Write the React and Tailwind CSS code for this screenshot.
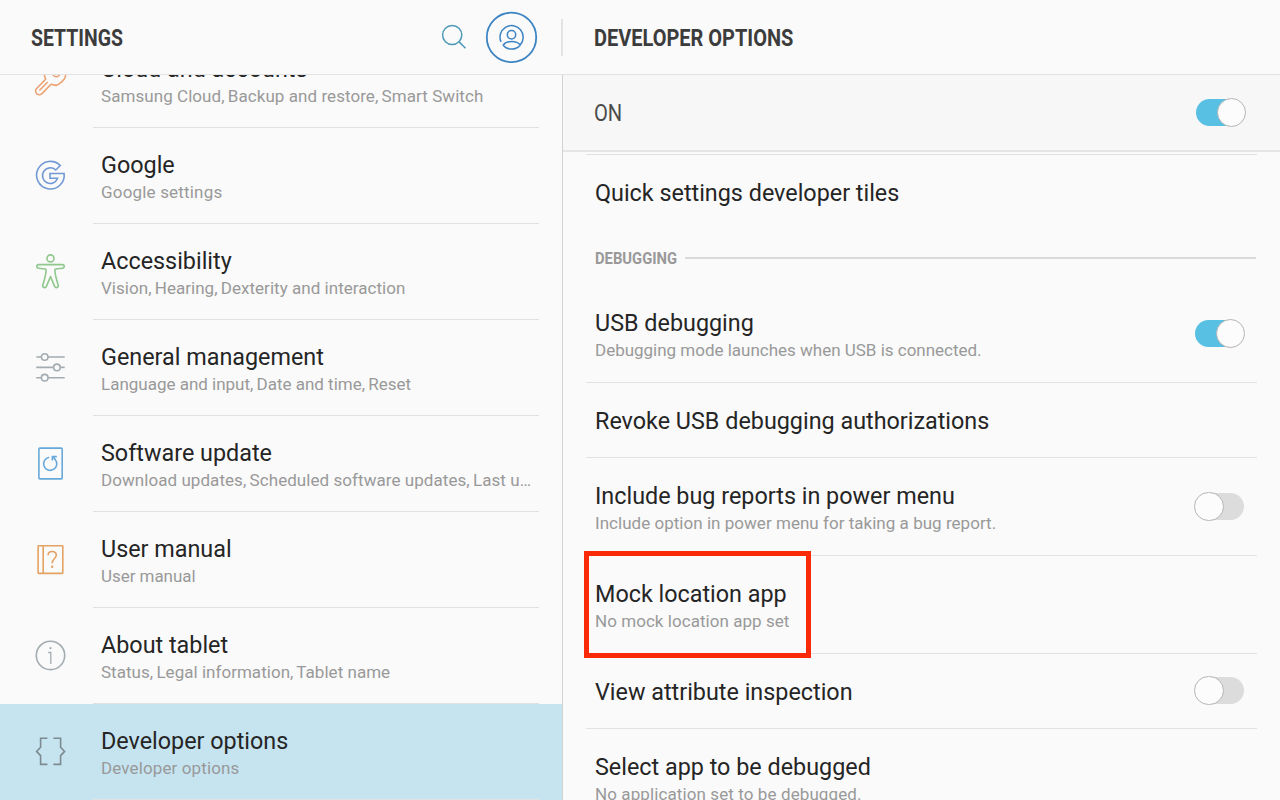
import React from "react";

function Icon({ color, children }) {
  return (
    <svg className={`h-9 w-9 ${color}`} viewBox="0 0 36 36" fill="none" stroke="currentColor" strokeWidth="1.6" strokeLinejoin="round">
      {children}
    </svg>
  );
}

const KeyIcon = () => (
  <Icon color="text-[#eda273]">
    <path d="M12.3 13C11.6 6 17 1.5 23 1.7C30 2 35 8 33.2 15.2C32 18.5 27.5 22.5 24 23.4L19 22.2L10 31.6C8 33.4 4.9 33 4 30.8C3.5 29.3 3.5 27.8 4.4 26.8L13.6 17.2Z" />
    <path d="M7.4 28.5L15.7 20" />
    <circle cx="24.3" cy="11.4" r="3.4" />
  </Icon>
);

const GoogleIcon = () => (
  <Icon color="text-[#7299d3]">
    <path d="M28.3 7.6A13.8 13.8 0 1 0 32.1 15.5H18V20.3H25.6A7.8 7.8 0 1 1 23.7 12Z" strokeLinejoin="miter" />
  </Icon>
);

const AccessibilityIcon = () => (
  <Icon color="text-[#8fc78c]">
    <circle cx="18.5" cy="4.4" r="3.5" />
    <path d="M6.6 10.6H30.4A1.8 1.8 0 0 1 30.4 14.2L23.6 15C23 15 22.9 15.5 22.9 16.2C23 21.5 25 26.5 26.2 31.2C26.8 33.6 23.6 34.5 22.6 32.4L18.5 22.6L14.4 32.4C13.4 34.5 10.2 33.6 10.8 31.2C12 26.5 14 21.5 14.1 16.2C14.1 15.5 14 15 13.4 15L6.6 14.2A1.8 1.8 0 0 1 6.6 10.6Z" />
  </Icon>
);

const SlidersIcon = () => (
  <Icon color="text-[#a3acb1]">
    <path d="M4.3 7H9.4M16 7H32.7M4.3 17.4H21.6M28.2 17.4H32.7M4.3 27.7H9.4M16 27.7H32.7" />
    <circle cx="12.7" cy="7" r="3.3" />
    <circle cx="24.9" cy="17.4" r="3.3" />
    <circle cx="12.7" cy="27.7" r="3.3" />
  </Icon>
);

const UpdateIcon = () => (
  <Icon color="text-[#67a9da]">
    <rect x="6.9" y="2.1" width="23.3" height="30.8" rx="1" />
    <path d="M17.2 11.2A6.6 6.6 0 1 0 23.2 13.4L20.6 10.8" />
    <path d="M20.4 14.6V10.6H24.8" strokeLinejoin="miter" />
  </Icon>
);

const ManualIcon = () => (
  <Icon color="text-[#e4a262]">
    <rect x="6.1" y="3.8" width="24.7" height="27.6" rx=".6" />
    <path d="M11.2 3.6V31.6" />
    <path d="M16.1 13.2C16.1 10.9 17.8 9.5 20.2 9.5C22.6 9.5 24.3 11 24.3 13.2C24.3 16.3 20.2 16.8 20.2 21.2" />
    <circle cx="20.2" cy="24.7" r="1.2" fill="currentColor" stroke="none" />
  </Icon>
);

const InfoIcon = () => (
  <Icon color="text-[#a3acb1]">
    <circle cx="18.5" cy="17.4" r="14.2" />
    <path d="M16.2 14.5H18.8V26" strokeWidth="1.3" strokeLinejoin="miter" />
    <circle cx="18.4" cy="10.2" r="1.1" fill="currentColor" stroke="none" />
  </Icon>
);

const BracesIcon = () => (
  <Icon color="text-[#7d8a8f]">
    <path d="M15.4 4.3H8.6V13.2L4.6 17.4L8.6 21.6V30.4H15.4M21.4 4.3H28.6V13.2L32.6 17.4L28.6 21.6V30.4H21.4" strokeLinejoin="miter" />
  </Icon>
);

const categories = [
  { title: "Cloud and accounts", detail: "Samsung Cloud, Backup and restore, Smart Switch", Glyph: KeyIcon, tracking: "tracking-[0.06px]" },
  { title: "Google", detail: "Google settings", Glyph: GoogleIcon, tracking: "tracking-[0.18px]" },
  { title: "Accessibility", detail: "Vision, Hearing, Dexterity and interaction", Glyph: AccessibilityIcon },
  { title: "General management", detail: "Language and input, Date and time, Reset", Glyph: SlidersIcon, tracking: "tracking-[-0.01px]" },
  { title: "Software update", detail: "Download updates, Scheduled software updates, Last u…", Glyph: UpdateIcon, tracking: "tracking-[0.06px]" },
  { title: "User manual", detail: "User manual", Glyph: ManualIcon, tracking: "tracking-[-0.05px]" },
  { title: "About tablet", detail: "Status, Legal information, Tablet name", Glyph: InfoIcon },
  { title: "Developer options", detail: "Developer options", Glyph: BracesIcon, selected: true, tracking: "tracking-[0.12px]" },
];

// Commas are set slightly tight against the following space.
function Detail({ text }) {
  return text.split(/(,)/).map((part, i) =>
    part === "," ? (
      <span key={i} className="tracking-[-1px]">,</span>
    ) : (
      part
    )
  );
}

function Label({ title, detail, tracking = "tracking-[0.03px]" }) {
  return (
    <div className="whitespace-nowrap">
      <div className="h-8 w-max origin-left scale-x-[0.973] text-[24px] leading-8 text-[#252525]">{title}</div>
      {detail && (
        <div className={`mt-px h-5 text-[17px] leading-5 text-[#999999] ${tracking}`}>
          <Detail text={detail} />
        </div>
      )}
    </div>
  );
}

function Category({ title, detail, Glyph, selected, tracking }) {
  return (
    <li className={`flex h-24 shrink-0 ${selected ? "bg-[#c5e4f0]" : ""}`}>
      <div className="w-[93px] shrink-0 pt-[30px] pl-8">
        <Glyph />
      </div>
      <div className="w-[446px] border-b border-[#e2e2e2] pt-[21px] pl-2">
        <Label title={title} detail={detail} tracking={tracking} />
      </div>
    </li>
  );
}

function Toggle({ on }) {
  return (
    <div className={`flex h-[27px] w-[49px] shrink-0 items-center rounded-full ${on ? "justify-end bg-[#58c0e3]" : "justify-start bg-[#dcdcdc]"}`}>
      <div className={`h-[29px] w-[29.5px] shrink-0 rounded-full border border-[#b4b4b4] bg-[#fcfcfc] ${on ? "-mr-px" : "-ml-px"}`} />
    </div>
  );
}

function Option({ title, detail, toggle, highlighted, tracking }) {
  return (
    <div className={`relative ml-[23px] flex w-[671px] shrink-0 justify-between border-b border-[#e2e2e2] pl-[9px] ${detail ? "h-[98px]" : "h-[75px]"}`}>
      <div className="pt-[22px]">
        <Label title={title} detail={detail} tracking={tracking} />
      </div>
      {toggle && (
        <div className={`flex items-center pr-[13px] ${detail ? "" : "pb-px"}`}>
          <Toggle on={toggle === "on"} />
        </div>
      )}
      {highlighted && <div className="absolute -top-[5px] -left-[2px] h-[107px] w-[227px] border-[5px] border-[#fa2a08]" />}
    </div>
  );
}

function Header() {
  return (
    <header className="flex h-[75px] shrink-0 items-center border-b border-[#e3e3e3] text-[24px] font-bold text-[#3c3c3c]">
      <div className="w-[410px] pt-[2px] pl-[31px]">
        <h1 className="w-max origin-left scale-x-[0.81] whitespace-nowrap">SETTINGS</h1>
      </div>
      <svg className="ml-[28px] h-[74px] w-[106px]" viewBox="438 0 106 74" fill="none" strokeWidth="1.5">
        <g stroke="#4d9ab7">
          <circle cx="452.2" cy="35" r="9.6" />
          <path d="M458.9 41.6L465.5 48.3" />
        </g>
        <g stroke="#3d84c3">
          <circle cx="511.5" cy="37.4" r="24.7" strokeWidth="1.8" />
          <path d="M501 41.9A11.6 11.6 0 1 1 520.2 45" />
          <circle cx="511.5" cy="34.7" r="4.2" />
          <path d="M503.2 45.1C505 42.5 508 41.5 511.6 41.5C515.5 41.5 518.5 42.6 520.2 45C518 48 515 49.1 511.6 49.1C508 49.1 505 47.6 503.2 45.1Z" />
        </g>
      </svg>
      <div className="ml-[17px] h-[37px] w-[2px] bg-[#e3e3e3]" />
      <div className="pt-[2px] pl-[31px]">
        <h2 className="w-max origin-left scale-x-[0.832] whitespace-nowrap">DEVELOPER OPTIONS</h2>
      </div>
    </header>
  );
}

export default function App() {
  return (
    <div className="flex h-[800px] w-[1280px] flex-col overflow-hidden bg-[#fafafa] font-['Roboto',sans-serif]">
      <Header />
      <div className="flex min-h-0 flex-1">
        <nav className="w-[562px] shrink-0 overflow-hidden">
          <ul className="-mt-[43px] flex flex-col">
            {categories.map((c) => (
              <Category key={c.title} {...c} />
            ))}
          </ul>
        </nav>
        <main className="flex w-[718px] flex-col overflow-hidden border-l border-[#d2d2d2]">
          <div className="flex h-[77px] shrink-0 items-center justify-between border-b-2 border-[#e5e5e5] bg-[#f7f7f7] pr-[35px] pl-[31px]">
            <span className="origin-left scale-x-[0.84] text-[24px] text-[#4b4b4b]">ON</span>
            <Toggle on />
          </div>
          <div className="mt-[2px] ml-[23px] h-px w-[671px] shrink-0 bg-[#e2e2e2]" />
          <div className="ml-[23px] flex h-[75px] shrink-0 pt-[22px] pl-[9px]">
            <Label title="Quick settings developer tiles" />
          </div>
          <div className="flex h-[55px] shrink-0 items-center pr-6 pl-8">
            <div className="w-[90px] pt-[2px]">
              <h3 className="w-max origin-left scale-x-[0.87] text-[17px] font-bold whitespace-nowrap text-[#999999]">DEBUGGING</h3>
            </div>
            <div className="h-[2px] flex-1 bg-[#d9d9d9]" />
          </div>
          <Option title="USB debugging" detail="Debugging mode launches when USB is connected." toggle="on" tracking="tracking-[-0.01px]" />
          <Option title="Revoke USB debugging authorizations" />
          <Option title="Include bug reports in power menu" detail="Include option in power menu for taking a bug report." toggle="off" tracking="tracking-[0.03px]" />
          <Option title="Mock location app" detail="No mock location app set" highlighted tracking="tracking-[0.05px]" />
          <Option title="View attribute inspection" toggle="off" />
          <Option title="Select app to be debugged" detail="No application set to be debugged." tracking="tracking-[0.1px]" />
        </main>
      </div>
    </div>
  );
}
